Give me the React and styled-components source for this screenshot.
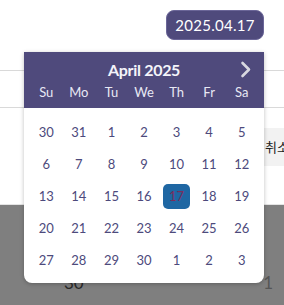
import React from "react";
import styled, { createGlobalStyle } from "styled-components";

const Global = createGlobalStyle`
  html, body { margin: 0; padding: 0; background: #ffffff; }
  body { font-family: "Lato", "Noto Sans", "Noto Sans CJK KR", sans-serif; width: 284px; height: 305px; overflow: hidden; }
`;

const Screen = styled.div`
  position: relative;
  width: 284px;
  height: 305px;
  overflow: hidden;
  display: flex;
  flex-direction: column;
`;

const Panel = styled.div`
  height: 204px;
  background: #ffffff;
  border-bottom: 1px solid #e4e4e4;
  display: flex;
  flex-direction: column;
`;

const Toolbar = styled.div`
  height: 71px;
  display: flex;
  justify-content: flex-end;
  align-items: flex-start;
  padding: 10px 20px 0 0;
  box-sizing: border-box;
  border-bottom: 1px solid #d9d9d9;
`;

const DateButton = styled.button`
  width: 98px;
  height: 30px;
  border-radius: 8px;
  border: 1px solid #6b6698;
  background: #4f4a7c;
  color: #ffffff;
  font-family: "Lato", sans-serif;
  font-size: 15px;
  letter-spacing: 0.3px;
  padding: 0;
`;

const Row = styled.div`
  height: 36px;
  border-bottom: 1px solid #d9d9d9;
`;

const ActionRow = styled.div`
  flex: 1;
  display: flex;
  justify-content: flex-end;
  align-items: flex-start;
  padding-top: 20px;
`;

const CancelButton = styled.div`
  width: 19px;
  height: 38px;
  background: #f2f2f2;
  overflow: hidden;
  white-space: nowrap;
  font-size: 13px;
  color: #222;
  line-height: 38px;
  padding-left: 1px;
  font-family: "Noto Sans CJK KR", sans-serif;
`;

const Backdrop = styled.div`
  flex: 1;
  background: #7f7f7f;
  position: relative;
  display: flex;
  justify-content: space-between;
  align-items: flex-end;
  padding: 0 11px 14px 64px;
`;

const BackText = styled.span`
  font-size: ${(p) => p.$size}px;
  color: ${(p) => p.$color};
  line-height: 1;
`;

const Popup = styled.div`
  position: absolute;
  left: 24px;
  top: 52px;
  width: 240px;
  height: 231px;
  background: #ffffff;
  border-radius: 0 0 8px 8px;
  box-shadow: 0 1px 4px rgba(0, 0, 0, 0.25);
  overflow: hidden;
  display: flex;
  flex-direction: column;
`;

const Header = styled.div`
  position: relative;
  height: 56px;
  background: #4f4a7c;
  display: flex;
  flex-direction: column;
  align-items: center;
  padding: 7px 6px 0;
  box-sizing: border-box;
`;

const Title = styled.div`
  color: #f4f4fa;
  font-weight: 700;
  font-size: 16px;
  line-height: 21px;
  letter-spacing: -0.3px;
`;

const NextButton = styled.div`
  position: absolute;
  right: 12px;
  top: 9px;
  width: 12px;
  height: 17px;
  display: flex;
`;

const Grid = styled.div`
  display: grid;
  grid-template-columns: repeat(7, 1fr);
  width: 100%;
`;

const DayName = styled.div`
  text-align: center;
  color: #e8e8f4;
  font-size: 13px;
  line-height: 18px;
  margin-top: 3px;
`;

const Days = styled(Grid)`
  padding: 8px 6px 0;
  box-sizing: border-box;
  grid-auto-rows: 32px;
`;

const Day = styled.div`
  display: flex;
  align-items: center;
  justify-content: center;
`;

const DayLabel = styled.span`
  display: flex;
  align-items: center;
  justify-content: center;
  width: 27px;
  height: 25px;
  border-radius: 5px;
  font-size: 13px;
  color: ${(p) => (p.$selected ? "#7a2d5c" : "#4d4a7c")};
  background: ${(p) => (p.$selected ? "#1f67a3" : "transparent")};
`;

const names = ["Su", "Mo", "Tu", "We", "Th", "Fr", "Sa"];
const days = [
  30, 31, 1, 2, 3, 4, 5,
  6, 7, 8, 9, 10, 11, 12,
  13, 14, 15, 16, 17, 18, 19,
  20, 21, 22, 23, 24, 25, 26,
  27, 28, 29, 30, 1, 2, 3,
];

export default function App() {
  return (
    <>
      <Global />
      <Screen>
        <Panel>
          <Toolbar>
            <DateButton>2025.04.17</DateButton>
          </Toolbar>
          <Row />
          <ActionRow>
            <CancelButton>취소</CancelButton>
          </ActionRow>
        </Panel>
        <Backdrop>
          <BackText $size={17} $color="#2a2a2a">30</BackText>
          <BackText $size={17} $color="#555555">1</BackText>
        </Backdrop>
        <Popup>
          <Header>
            <Title>April 2025</Title>
            <NextButton>
              <svg width="12" height="17" viewBox="0 0 12 17" fill="none">
                <polyline points="2.5,2 9,8.5 2.5,15" stroke="#d8d8e0" strokeWidth="2.6" strokeLinecap="round" strokeLinejoin="round" />
              </svg>
            </NextButton>
            <Grid>
              {names.map((n) => (
                <DayName key={n}>{n}</DayName>
              ))}
            </Grid>
          </Header>
          <Days>
            {days.map((d, i) => (
              <Day key={i}>
                <DayLabel $selected={i === 18}>{d}</DayLabel>
              </Day>
            ))}
          </Days>
        </Popup>
      </Screen>
    </>
  );
}
